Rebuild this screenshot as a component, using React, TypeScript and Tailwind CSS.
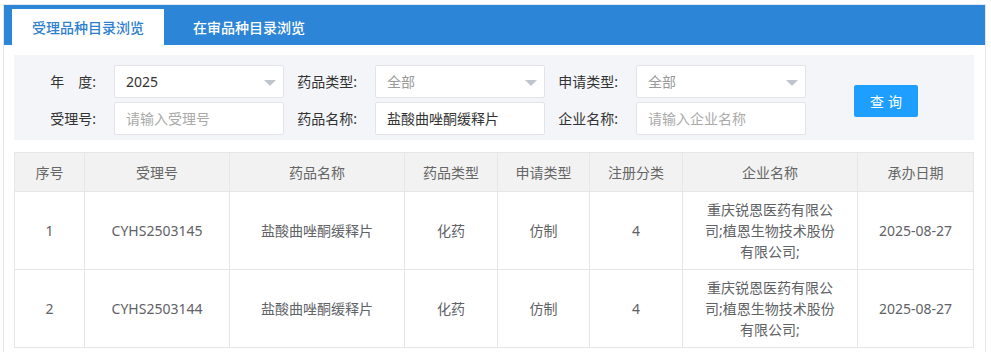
import React from 'react';

const font = "font-['Noto_Sans','Noto_Sans_CJK_SC',sans-serif]";

const columns = [
  { key: 'no', label: '序号', width: 70 },
  { key: 'acceptNo', label: '受理号', width: 145 },
  { key: 'drug', label: '药品名称', width: 175 },
  { key: 'drugType', label: '药品类型', width: 93 },
  { key: 'applyType', label: '申请类型', width: 92 },
  { key: 'regClass', label: '注册分类', width: 93 },
  { key: 'company', label: '企业名称', width: 175 },
  { key: 'date', label: '承办日期', width: 116 },
];

const rows = [
  {
    no: '1',
    acceptNo: 'CYHS2503145',
    drug: '盐酸曲唑酮缓释片',
    drugType: '化药',
    applyType: '仿制',
    regClass: '4',
    company: '重庆锐恩医药有限公司;植恩生物技术股份有限公司;',
    date: '2025-08-27',
  },
  {
    no: '2',
    acceptNo: 'CYHS2503144',
    drug: '盐酸曲唑酮缓释片',
    drugType: '化药',
    applyType: '仿制',
    regClass: '4',
    company: '重庆锐恩医药有限公司;植恩生物技术股份有限公司;',
    date: '2025-08-27',
  },
];

function Arrow() {
  return (
    <svg width="12" height="6" viewBox="0 0 12 6" className="absolute right-[7px] top-[14px]">
      <path d="M0 0 L12 0 L6 6 Z" fill="#c0c4cc" />
    </svg>
  );
}

function Field({
  label,
  labelWidth,
  value,
  placeholder,
  select,
  muted,
}: {
  label: string;
  labelWidth: number;
  value?: string;
  placeholder?: string;
  select?: boolean;
  muted?: boolean;
}) {
  return (
    <div className="flex items-center">
      <div
        className="text-right pr-[18px] text-[14px] text-[#333] whitespace-pre"
        style={{ width: labelWidth }}
      >
        {label}
      </div>
      <div className="relative w-[170px] h-[33px] bg-white border border-[#e2e4ea] rounded-[2px] pl-[11px] flex items-center text-[14px]">
        {value ? (
          <span className={muted ? 'text-[#999]' : 'text-[#333]'}>{value}</span>
        ) : (
          <span className="text-[#aaa]">{placeholder}</span>
        )}
        {select && <Arrow />}
      </div>
    </div>
  );
}

export default function App() {
  return (
    <div className={`w-[991px] h-[352px] bg-white overflow-hidden ${font}`}>
      <div className="ml-[3px] mt-[4px] w-[983px] h-[360px] border-x border-t border-[#e4e7ef]">
        {/* tab bar */}
        <div className="h-[40px] bg-[#2d85d8] flex items-end pl-[8px]">
          <div className="h-[36px] w-[152px] bg-white flex items-center justify-center text-[14px] font-medium text-[#2f7fd0]">
            受理品种目录浏览
          </div>
          <div className="h-[36px] ml-[29px] flex items-center text-[14px] font-medium text-white">
            在审品种目录浏览
          </div>
        </div>

        <div className="pl-[10px] pr-[11px] pt-[10px]">
          {/* filter panel */}
          <div className="h-[85px] bg-[#f4f5f8] pt-[10px] flex">
            <div className="flex flex-col gap-[4px]">
              <div className="flex">
                <Field label={'年\u3000度:'} labelWidth={100} value="2025" select />
                <Field label="药品类型:" labelWidth={91} value="全部" muted select />
                <Field label="申请类型:" labelWidth={91} value="全部" muted select />
              </div>
              <div className="flex">
                <Field label="受理号:" labelWidth={100} placeholder="请输入受理号" />
                <Field label="药品名称:" labelWidth={91} value="盐酸曲唑酮缓释片" />
                <Field label="企业名称:" labelWidth={91} placeholder="请输入企业名称" />
              </div>
            </div>
            <button className="ml-[48px] mt-[20px] w-[64px] h-[32px] bg-[#1e9fff] rounded-[2px] text-white text-[14px] tracking-[4px] pl-[4px]">
              查询
            </button>
          </div>

          {/* table */}
          <table className="mt-[12px] border-collapse table-fixed w-[959px] text-[14px]">
            <thead>
              <tr className="bg-[#f2f2f2]">
                {columns.map((c) => (
                  <th
                    key={c.key}
                    style={{ width: c.width }}
                    className="h-[39px] border border-[#e6e6e6] font-normal text-[#666] text-center"
                  >
                    {c.label}
                  </th>
                ))}
              </tr>
            </thead>
            <tbody>
              {rows.map((r) => (
                <tr key={r.no}>
                  {columns.map((c) => (
                    <td
                      key={c.key}
                      className={`h-[78px] border border-[#e6e6e6] text-center text-[#606266] leading-[21px] ${
                        c.key === 'company' ? 'px-[20px]' : 'px-[8px]'
                      }`}
                    >
                      {r[c.key as keyof typeof r]}
                    </td>
                  ))}
                </tr>
              ))}
            </tbody>
          </table>
        </div>
      </div>
    </div>
  );
}
